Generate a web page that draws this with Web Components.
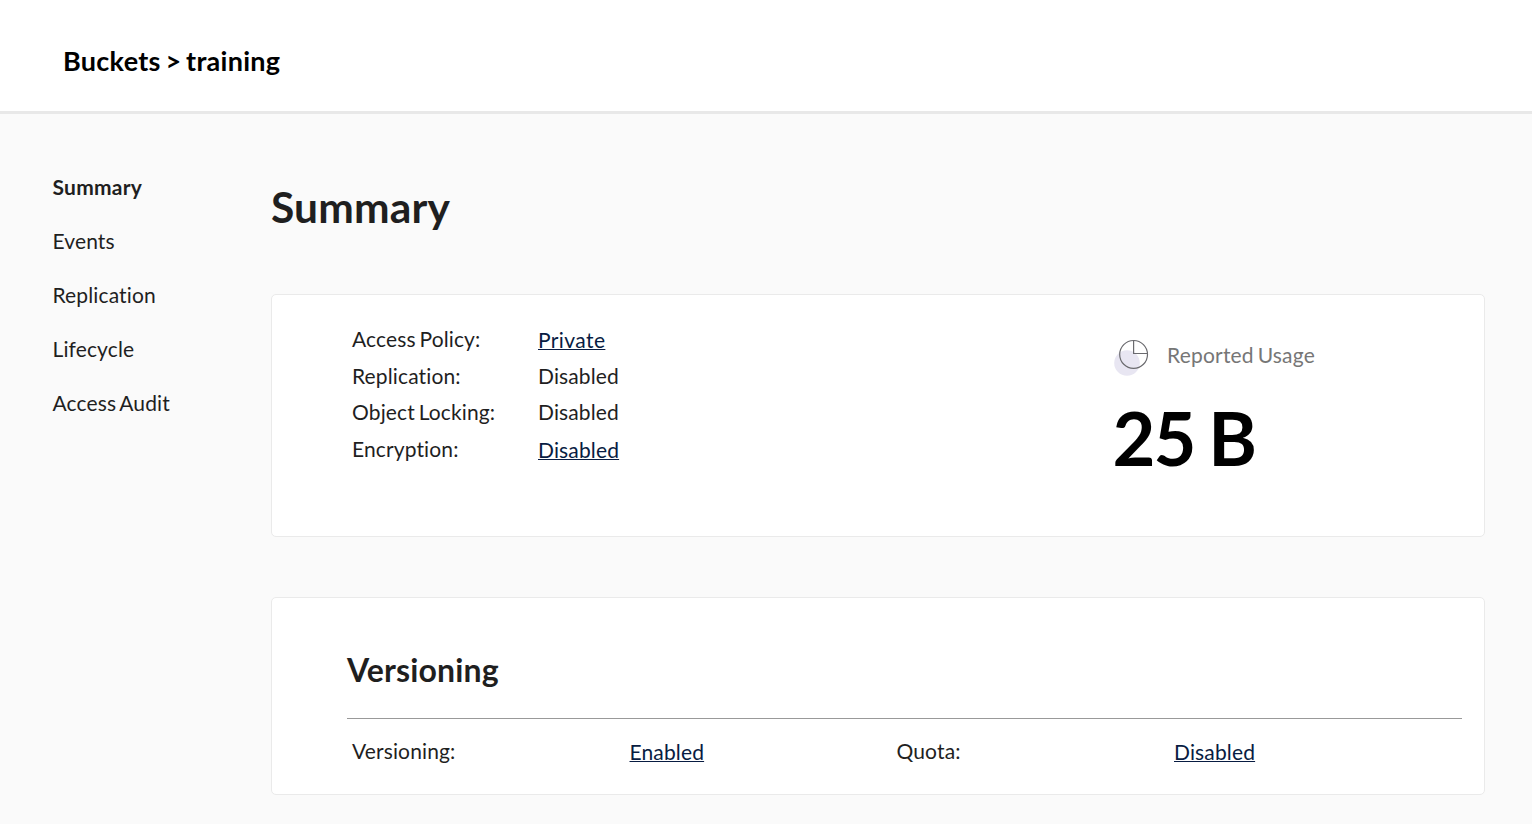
<!DOCTYPE html>
<html lang="en">
<head>
<meta charset="utf-8">
<title>Buckets &gt; training</title>
<style>
  html, body { margin: 0; height: 100%; }
  body { background: #fafafa; color: #1f1f1f; font: 21px/24px Lato, sans-serif; overflow: hidden;
    font-variant-ligatures: none; letter-spacing: .13px; word-spacing: -1.7px; }
</style>
</head>
<body>
<bucket-page></bucket-page>
<script>
  const define = (name, html) => {
    const template = document.createElement('template');
    template.innerHTML = html;
    customElements.define(name, class extends HTMLElement {
      constructor() {
        super();
        this.attachShadow({ mode: 'open' }).append(template.content.cloneNode(true));
      }
    });
  };

  define('page-header', `
    <style>
      :host { display: flex; align-items: center; box-sizing: border-box; height: 114px;
        padding: 10px 0 0 63px; background: #fff; border-bottom: 3px solid #e8e8e8;
        color: #000; font-size: 27px; font-weight: 700; line-height: 32px;
        letter-spacing: .28px; word-spacing: -2.1px; }
    </style>
    <slot></slot>`);

  define('nav-item', `
    <style>
      :host { display: flex; align-items: center; height: 54px; }
      :host([selected]) { font-weight: 700; letter-spacing: .25px; }
    </style>
    <slot></slot>`);

  define('side-nav', `
    <style>
      :host { display: flex; flex-direction: column; box-sizing: border-box;
        padding: 46px 0 0 52.5px; }
    </style>
    <slot></slot>`);

  define('info-card', `
    <style>
      :host { display: block; box-sizing: border-box; background: #fff;
        border: 1px solid #eaeaea; border-radius: 5px; }
    </style>
    <slot></slot>`);

  define('info-pair', `
    <style>
      :host { display: grid; grid-template-columns: var(--label-width, 186px) auto; justify-content: start; }
      ::slotted(a) { color: #081c42; text-decoration: underline 1px; text-underline-offset: 1px;
        text-decoration-skip-ink: none; padding-top: 1px; letter-spacing: .15px; }
    </style>
    <span><slot name="label"></slot></span>
    <slot></slot>`);

  define('usage-icon', `
    <style>:host, svg { display: block; width: 36px; height: 38px; }</style>
    <svg viewBox="0 0 36 38" fill="none">
      <circle cx="13" cy="25" r="12.8" fill="#e8e6f2"/>
      <g stroke="#6a6a6e" stroke-width="1.2">
        <circle cx="19.6" cy="16.4" r="13.9"/>
        <path d="M19.6 2.5V15.5H33.5"/>
      </g>
    </svg>`);

  define('usage-report', `
    <style>
      :host { display: block; }
      .title { display: flex; align-items: center; height: 38px; gap: 17px; color: #767676; }
      .title > span { padding-bottom: 4px; letter-spacing: .2px; }
      .value { color: #000; font-size: 74px; font-weight: 700; line-height: 90px; margin: 17px 0 0 -1.5px;
        letter-spacing: -2px; word-spacing: -2px; }
    </style>
    <div class="title"><usage-icon></usage-icon><span><slot name="title"></slot></span></div>
    <div class="value"><slot></slot></div>`);

  define('bucket-page', `
    <style>
      :host { display: block; }
      .body { display: grid; grid-template-columns: 271px 1214px; }
      h1 { margin: 0; padding-top: 67px; height: 113px; font-size: 42.5px; line-height: 52px; letter-spacing: .15px; }
      h2 { margin: 0; font-size: 32px; line-height: 40px; padding-bottom: 28px; border-bottom: 1px solid #999; }
      .summary { display: grid; grid-template-columns: 762px auto; align-content: start;
        height: 243px; padding: 32px 0 0 80px; margin-bottom: 60px; }
      .facts { display: grid; grid-template-rows: 37px 36px 37px 36px; }
      .facts .policy { letter-spacing: .4px; }
      .versioning { height: 198px; padding: 52px 22px 0 75px; }
      .pairs { display: grid; grid-template-columns: 544.5px auto; padding: 20px 0 0 5px; --label-width: 277.5px; }
      usage-report { padding-top: 11px; }
    </style>
    <page-header>Buckets &gt; training</page-header>
    <div class="body">
      <side-nav>
        <nav-item selected>Summary</nav-item>
        <nav-item>Events</nav-item>
        <nav-item>Replication</nav-item>
        <nav-item>Lifecycle</nav-item>
        <nav-item>Access Audit</nav-item>
      </side-nav>
      <main>
        <h1>Summary</h1>
        <info-card class="summary">
          <div class="facts">
            <info-pair><span slot="label">Access Policy:</span><a class="policy">Private</a></info-pair>
            <info-pair><span slot="label">Replication:</span><span>Disabled</span></info-pair>
            <info-pair><span slot="label">Object Locking:</span><span>Disabled</span></info-pair>
            <info-pair><span slot="label">Encryption:</span><a>Disabled</a></info-pair>
          </div>
          <usage-report><span slot="title">Reported Usage</span>25 B</usage-report>
        </info-card>
        <info-card class="versioning">
          <h2>Versioning</h2>
          <div class="pairs">
            <info-pair><span slot="label">Versioning:</span><a>Enabled</a></info-pair>
            <info-pair><span slot="label">Quota:</span><a>Disabled</a></info-pair>
          </div>
        </info-card>
      </main>
    </div>`);
</script>
</body>
</html>
